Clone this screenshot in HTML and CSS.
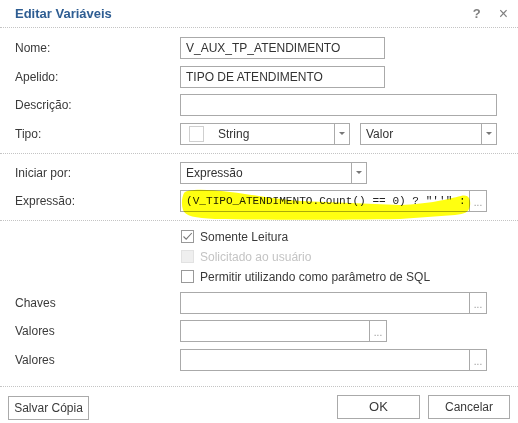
FILE: index.html
```html
<!DOCTYPE html>
<html lang="pt">
<head>
<meta charset="utf-8">
<title>Editar Variáveis</title>
<link rel="stylesheet" href="styles.css">
</head>
<body>
<div class="dialog">
  <header class="titlebar">
    <span class="title">Editar Variáveis</span>
    <span class="tools"><span class="help">?</span><span class="close">×</span></span>
  </header>

  <section class="sec sec1">
    <div class="row"><span class="lbl">Nome:</span><div class="field w-nome">V_AUX_TP_ATENDIMENTO</div></div>
    <div class="row"><span class="lbl">Apelido:</span><div class="field w-nome">TIPO DE ATENDIMENTO</div></div>
    <div class="row"><span class="lbl">Descrição:</span><div class="field w-desc"></div></div>
    <div class="row"><span class="lbl">Tipo:</span>
      <div class="combo w-tipo"><span class="val"><span class="swatch"></span><span class="str">String</span></span><span class="arrow"><i class="tri"></i></span></div>
      <div class="combo w-valor"><span class="val">Valor</span><span class="arrow"><i class="tri"></i></span></div>
    </div>
  </section>

  <section class="sec sec2">
    <div class="row"><span class="lbl">Iniciar por:</span>
      <div class="combo w-iniciar"><span class="val">Expressão</span><span class="arrow"><i class="tri"></i></span></div>
    </div>
    <div class="row"><span class="lbl">Expressão:</span>
      <div class="bfield w-wide"><span class="val mono">(V_TIPO_ATENDIMENTO.Count() == 0) ? "''" :</span><span class="dots">...</span></div>
    </div>
  </section>

  <section class="sec sec3">
    <div class="checks">
      <div class="check"><span class="box"><svg width="13" height="13" viewBox="0 0 13 13"><polyline points="2.5,6.5 5.2,9.2 10.8,3" fill="none" stroke="#777" stroke-width="1.1"/></svg></span><span>Somente Leitura</span></div>
      <div class="check disabled"><span class="box"></span><span>Solicitado ao usuário</span></div>
      <div class="check"><span class="box"></span><span>Permitir utilizando como parâmetro de SQL</span></div>
    </div>
    <div class="rows3">
      <div class="row"><span class="lbl">Chaves</span><div class="bfield w-wide"><span class="val"></span><span class="dots">...</span></div></div>
      <div class="row"><span class="lbl">Valores</span><div class="bfield w-mid"><span class="val"></span><span class="dots">...</span></div></div>
      <div class="row"><span class="lbl">Valores</span><div class="bfield w-wide"><span class="val"></span><span class="dots">...</span></div></div>
    </div>
  </section>

  <footer class="footer">
    <button class="btn w-salvar">Salvar Cópia</button>
    <div class="right">
      <button class="btn w-ok">OK</button>
      <button class="btn w-cancel">Cancelar</button>
    </div>
  </footer>

  <svg class="marker" width="518" height="423" viewBox="0 0 518 423">
    <path d="M184,193 C187,189 205,189 230,192 C255,195 275,199 300,201 L400,205 C430,204 448,199 461,196 C469,194 471,200 470,206 C469,212 465,214 455,215 L400,219 C340,220 260,220 215,219 C195,218 185,216 183,210 C181,204 182,197 184,193 Z" fill="#ffff10"/>
  </svg>
</div>
</body>
</html>
```

FILE: styles.css
```css
html, body {
  margin: 0;
  padding: 0;
  background: #fff;
}
body {
  font-family: "Liberation Sans", Arial, sans-serif;
  color: #3a3a3a;
  font-size: 12px;
}
.dialog {
  position: relative;
  width: 518px;
  height: 423px;
  background: #fff;
  overflow: hidden;
}
.titlebar {
  box-sizing: border-box;
  height: 28px;
  border-bottom: 1px dotted #c4c4c4;
  display: flex;
  align-items: center;
  justify-content: space-between;
  padding: 0 10px 0 15px;
}
.title {
  font-weight: bold;
  font-size: 13px;
  color: #2e5d92;
}
.tools {
  display: flex;
  align-items: center;
  gap: 18px;
  color: #808080;
}
.help {
  font-weight: bold;
  font-size: 13px;
}
.close {
  font-size: 16px;
  line-height: 16px;
}
.sec {
  display: flex;
  flex-direction: column;
  border-bottom: 1px dotted #c4c4c4;
}
.sec1 {
  padding: 9px 0 8px;
  gap: 6.67px;
}
.sec2 {
  padding: 8px 0 8px;
  gap: 6px;
}
.sec3 {
  padding: 6px 0 15px;
  gap: 5px;
}
.rows3 {
  display: flex;
  flex-direction: column;
  gap: 6.5px;
}
.row {
  display: flex;
  align-items: center;
  height: 22px;
}
.lbl {
  box-sizing: border-box;
  width: 180px;
  padding-left: 15px;
  font-size: 12px;
  color: #3a3a3a;
}
.field, .combo, .bfield {
  box-sizing: border-box;
  height: 22px;
  border: 1px solid #aaa;
  display: flex;
  align-items: center;
  font-size: 12px;
  color: #333;
  background: #fff;
}
.field {
  padding-left: 5px;
  white-space: nowrap;
  overflow: hidden;
}
.combo .val, .bfield .val {
  flex: 1;
  min-width: 0;
  display: flex;
  align-items: center;
  padding-left: 5px;
  white-space: nowrap;
  overflow: hidden;
  height: 100%;
}
.combo .arrow {
  box-sizing: border-box;
  width: 15px;
  height: 100%;
  border-left: 1px solid #aaa;
  display: flex;
  align-items: center;
  justify-content: center;
}
.tri {
  width: 0;
  height: 0;
  border-left: 3px solid transparent;
  border-right: 3px solid transparent;
  border-top: 3px solid #777;
}
.bfield .dots {
  box-sizing: border-box;
  width: 17px;
  height: 100%;
  border-left: 1px solid #aaa;
  display: flex;
  align-items: center;
  justify-content: center;
  font-size: 10px;
  color: #999;
  padding-top: 3px;
}
.swatch {
  box-sizing: border-box;
  width: 15px;
  height: 16px;
  border: 1px solid #cfcfcf;
  margin-left: 3px;
}
.str {
  margin-left: 14px;
}
.mono {
  font-family: "Liberation Mono", "Courier New", monospace;
  font-size: 11.1px;
  color: #222;
}
.w-nome { width: 205px; }
.w-desc { width: 317px; }
.w-tipo { width: 170px; }
.w-valor { width: 137px; margin-left: 10px; }
.w-iniciar { width: 187px; }
.w-wide { width: 307px; }
.w-mid { width: 207px; }
.checks {
  display: flex;
  flex-direction: column;
  margin-left: 181px;
}
.check {
  display: flex;
  align-items: center;
  height: 20px;
  gap: 6px;
  font-size: 12px;
  color: #3a3a3a;
}
.check .box {
  box-sizing: border-box;
  width: 13px;
  height: 13px;
  border: 1px solid #999;
  background: #fff;
  display: flex;
}
.check .box svg {
  margin: -1px;
}
.check.disabled {
  color: #c4c4c4;
}
.check.disabled .box {
  border-color: #e2e2e2;
  background: #efefef;
}
.footer {
  display: flex;
  justify-content: space-between;
  align-items: flex-start;
  padding: 8px 8px 0 8px;
}
.right {
  display: flex;
  gap: 8px;
}
.btn {
  box-sizing: border-box;
  height: 24px;
  border: 1px solid #aaa;
  background: #fff;
  font-family: "Liberation Sans", Arial, sans-serif;
  font-size: 12px;
  color: #3a3a3a;
  padding: 0;
  margin: 0;
  border-radius: 0;
}
.w-salvar { width: 81px; margin-top: 1px; }
.w-ok { width: 83px; font-size: 13px; }
.w-cancel { width: 82px; }
.marker {
  position: absolute;
  left: 0;
  top: 0;
  pointer-events: none;
  mix-blend-mode: multiply;
}
```
